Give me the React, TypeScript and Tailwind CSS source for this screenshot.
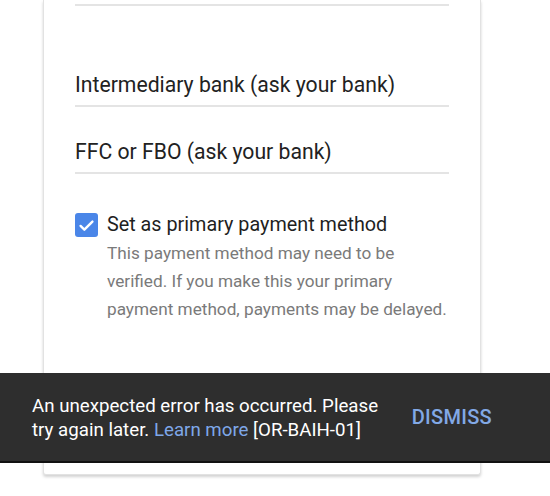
import { useState } from "react";

function Field({ label, className = "" }: { label: string; className?: string }) {
  return (
    <div
      className={`border-b-2 border-[#e4e4e4] pb-[6px] text-[21.2px] leading-[28px] text-[#222] ${className}`}
    >
      {label}
    </div>
  );
}

function PrimaryCheckbox() {
  const [checked, setChecked] = useState(true);

  return (
    <div className="flex items-start">
      <button
        onClick={() => setChecked(!checked)}
        className={`flex h-[24px] w-[23px] shrink-0 items-center justify-center rounded-[3px] ${
          checked ? "bg-[#4a86e8]" : "border-2 border-gray-400 bg-white"
        }`}
      >
        {checked && (
          <svg viewBox="0 0 24 24" className="h-[19px] w-[19px]">
            <path
              d="M4.5 12.5l4.8 4.8L19.5 7"
              fill="none"
              stroke="white"
              strokeWidth="3"
              strokeLinecap="round"
              strokeLinejoin="round"
            />
          </svg>
        )}
      </button>
      <div className="ml-[9px]">
        <div className="text-[19.8px] leading-[24px] text-[#1f1f1f]">
          Set as primary payment method
        </div>
        <p className="mt-[2px] text-[17.2px] leading-[28px] text-[#7a7a7a]">
          This payment method may need to be
          <br />
          verified. If you make this your primary
          <br />
          payment method, payments may be delayed.
        </p>
      </div>
    </div>
  );
}

export default function App() {
  const [showError, setShowError] = useState(true);

  return (
    <div
      className="relative h-[496px] w-[550px] overflow-hidden bg-white"
      style={{ fontFamily: "Roboto, 'Liberation Sans', sans-serif" }}
    >
      <div className="ml-[43px] h-[475px] w-[438px] rounded-b-[3px] border-x border-b border-[#e2e2e2] bg-white pl-[31px] pr-[31px] shadow-[0_2px_3px_rgba(0,0,0,0.18)]">
        <div className="h-[6px] border-b-2 border-[#e4e4e4]" />
        <Field label="Intermediary bank (ask your bank)" className="mt-[65px]" />
        <Field label="FFC or FBO (ask your bank)" className="mt-[31px]" />
        <div className="mt-[39px]">
          <PrimaryCheckbox />
        </div>
      </div>

      {showError && (
        <div className="absolute left-0 right-0 top-[373px] flex h-[90px] items-center border-b-2 border-[#111] bg-[#2e2e2e] pl-[32px] pr-[58px]">
          <p className="flex-1 pt-[2px] text-[18.7px] leading-[24px] text-white">
            An unexpected error has occurred. Please
            <br />
            try again later.{" "}
            <a href="#" className="text-[#7ea7e8]">
              Learn more
            </a>{" "}
            [OR-BAIH-01]
          </p>
          <button
            onClick={() => setShowError(false)}
            className="text-[20px] font-medium tracking-[0.3px] text-[#82a9e6]"
          >
            DISMISS
          </button>
        </div>
      )}
    </div>
  );
}
